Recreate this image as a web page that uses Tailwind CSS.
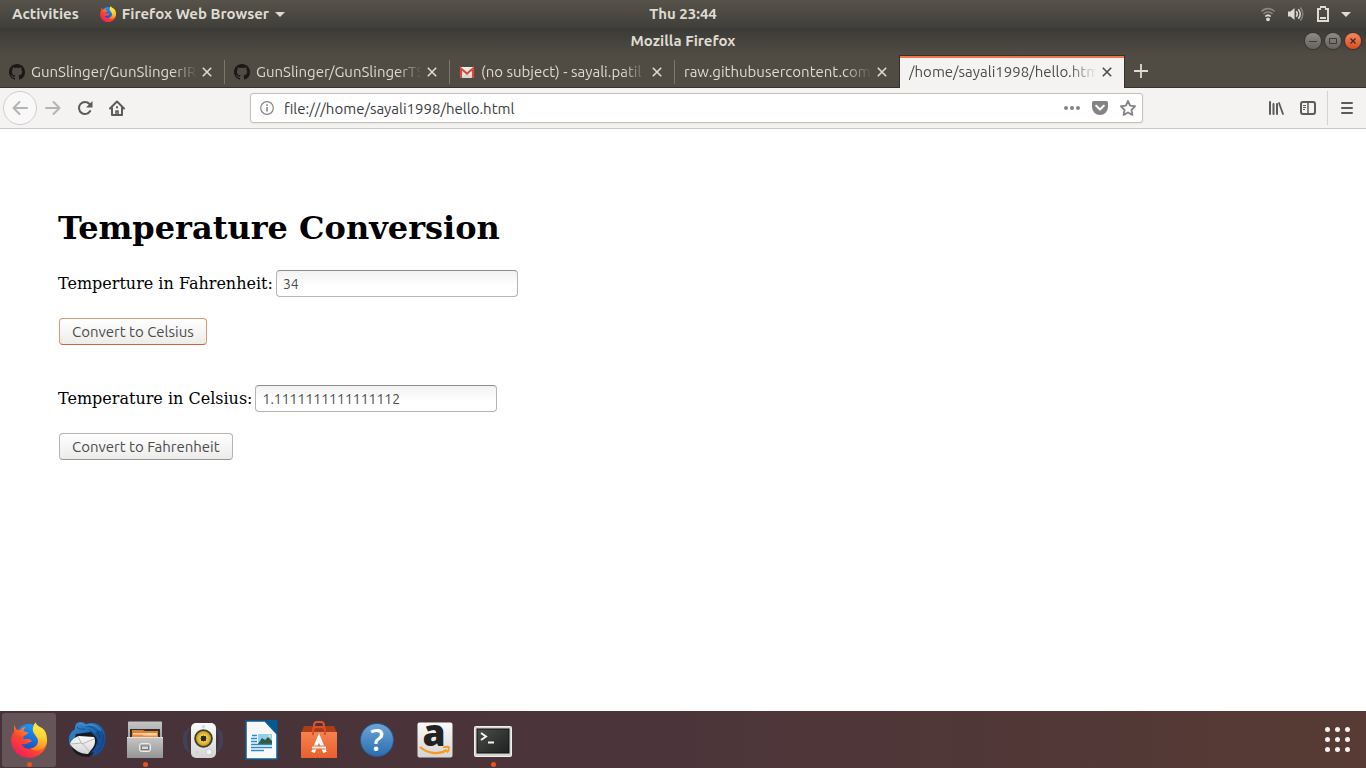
<!DOCTYPE html>
<html lang="en">
<head>
<meta charset="utf-8">
<meta name="viewport" content="width=device-width, initial-scale=1">
<title>Mozilla Firefox</title>
<script src="https://cdn.jsdelivr.net/npm/@tailwindcss/browser@4"></script>
</head>
<body class="flex min-h-screen flex-col bg-white font-['Ubuntu','Noto_Sans',sans-serif] text-[15px] leading-5 text-[#3c3c3c]">

<svg class="absolute size-0" aria-hidden="true">
  <defs>
    <linearGradient id="ffBody" x1="0.85" y1="0.1" x2="0.2" y2="0.9"><stop offset="0" stop-color="#ffd52e"/><stop offset="0.3" stop-color="#ff8a1f"/><stop offset="0.6" stop-color="#ff452e"/><stop offset="1" stop-color="#f0205c"/></linearGradient>
    <linearGradient id="ffTail" x1="0.5" y1="0" x2="0.4" y2="1"><stop offset="0" stop-color="#fff04a"/><stop offset="0.5" stop-color="#ffd030"/><stop offset="1" stop-color="#ff7d20"/></linearGradient>
    <linearGradient id="ffGlobe" x1="0.7" y1="0" x2="0.3" y2="1"><stop offset="0" stop-color="#1a9dff"/><stop offset="1" stop-color="#1c3fae"/></linearGradient>
    <linearGradient id="tbBlue" x1="0" y1="0" x2="1" y2="1"><stop offset="0" stop-color="#3c8fd0"/><stop offset="0.5" stop-color="#1d67b0"/><stop offset="1" stop-color="#123a7c"/></linearGradient>
    <linearGradient id="silver" x1="0" y1="0" x2="0" y2="1"><stop offset="0" stop-color="#c6c6c6"/><stop offset="1" stop-color="#959595"/></linearGradient>
    <linearGradient id="white" x1="0" y1="0" x2="0" y2="1"><stop offset="0" stop-color="#fafafa"/><stop offset="1" stop-color="#d4d4d4"/></linearGradient>
    <linearGradient id="bag" x1="0" y1="0" x2="0" y2="1"><stop offset="0" stop-color="#f58250"/><stop offset="1" stop-color="#e8602c"/></linearGradient>
    <linearGradient id="term" x1="0" y1="0" x2="1" y2="1"><stop offset="0" stop-color="#4b4d4b"/><stop offset="1" stop-color="#1e201f"/></linearGradient>
    <radialGradient id="cone"><stop offset="0" stop-color="#222"/><stop offset="0.38" stop-color="#333"/><stop offset="0.42" stop-color="#f3d24c"/><stop offset="1" stop-color="#c79a12"/></radialGradient>
    <symbol id="firefox" viewBox="0 0 36 36">
      <circle cx="18" cy="16.500" r="14.500" fill="url(#ffGlobe)"/>
      <path d="M3.500 2c-.6 2-.7 5.400-.3 7.200C1.200 12 .1 15 .1 18.300.1 28.200 8 36 18 36s18-7.700 18-17.700l-7 0c-1 5-5.600 8.500-10.600 8.500-4.300 0-6.500-1.700-7.700-5 2.200.8 4 .7 5.800-.3 1.700-1.100 2.500-1.500 3.500-1.500.9 0 .8-1.300 0-2-1.300-1-2.800-1.200-4.600-.9-1.500.3-2.500.2-3.200-.8-.4-1 .1-2 1.200-2.500l3-1.700c.5-.5.500-1.400.1-2-1.900-.1-3.100-.4-4-1.300.2-1.500 1.200-2.700 2.400-3.700-2.700.1-4.400 1-5.900 3-1.800-.3-2.500-.1-3.200.1C4.300 5 3.200 3.600 3.500 2Z" fill="url(#ffBody)"/>
      <path d="M24.500.2c-2 3-3.500 6.300-2.300 9.500 1.500 3.500 4.500 5.300 4.800 8.800.3 4-2.500 7-7.500 8.100 3.500 2.500 8.500 2.400 12 0 3.500-2.500 4.500-5 4.500-9.500 0-4-1.500-8.200-4-10.400-3-2.200-6.500-3-7.500-6.500Z" fill="url(#ffTail)"/>
    </symbol>
    <symbol id="github" viewBox="0 0 16 16"><path fill-rule="evenodd" d="M8 0C3.580 0 0 3.580 0 8c0 3.540 2.290 6.530 5.470 7.590.4.070.55-.17.55-.38 0-.19-.01-.82-.01-1.490-2.010.37-2.530-.49-2.690-.94-.09-.23-.48-.94-.82-1.130-.28-.15-.68-.52-.01-.53.63-.01 1.080.58 1.230.82.72 1.210 1.870.87 2.330.66.07-.52.28-.87.51-1.070-1.780-.2-3.640-.89-3.640-3.950 0-.87.31-1.590.82-2.150-.08-.2-.36-1.020.08-2.120 0 0 .67-.21 2.200.82.64-.18 1.320-.27 2-.27s1.360.09 2 .27c1.530-1.040 2.200-.82 2.200-.82.44 1.100.16 1.920.08 2.120.51.56.82 1.270.82 2.150 0 3.070-1.870 3.750-3.650 3.950.29.25.54.73.54 1.480 0 1.070-.01 1.930-.01 2.200 0 .21.15.46.55.38A8.010 8.010 0 0 0 16 8c0-4.420-3.580-8-8-8Z"/></symbol>
    <symbol id="close" viewBox="0 0 10 10"><path d="M.8.800l8.400 8.400M9.200.800.800 9.200" fill="none" stroke="currentColor" stroke-width="1.600"/></symbol>
  </defs>
</svg>

<!-- System panel -->
<header class="grid h-7 shrink-0 grid-cols-[1fr_auto_1fr] items-center bg-linear-to-b from-[#57534a] to-[#403f3a] px-3 font-bold text-[#dfdbd2]">
  <div class="flex items-center gap-[21px]">
    <button>Activities</button>
    <button class="flex items-center gap-[6px]">
      <svg class="size-4"><use href="#firefox"/></svg>
      <span class="whitespace-nowrap">Firefox Web Browser</span>
      <svg class="h-[5px] w-[10px]" viewBox="0 0 10 5"><path d="M0 0h10L5 5Z" fill="currentColor"/></svg>
    </button>
  </div>
  <button>Thu 23:44</button>
  <div class="flex items-center justify-end pr-[3px]">
    <button class="flex items-center gap-3" aria-label="System menu">
      <svg class="size-4" viewBox="0 0 16 16" fill="none" stroke="#dfdbd2" stroke-width="1.700"><path d="M1.500 5.500C5 1.700 11 1.700 14.500 5.500M3.500 8c2.500-2.700 6.500-2.700 9 0" opacity=".4"/><path d="M5.300 10.500c1.600-1.500 3.800-1.500 5.400 0"/><circle cx="8" cy="13.300" r="1.900" fill="#dfdbd2" stroke="none"/></svg>
      <svg class="h-4 w-[17px]" viewBox="0 0 17 16" fill="none" stroke="#dfdbd2" stroke-width="1.500"><path d="M0 5.500h2.500L6.500 2v12L2.500 10.500H0Z" fill="#dfdbd2" stroke="none"/><path d="M8.300 5.300c1.200 1.600 1.200 3.800 0 5.400M10.300 3.300c2.300 2.800 2.300 6.600 0 9.400"/><path d="M12.300 1.500c3.300 3.800 3.300 9.200 0 13" opacity=".4"/></svg>
      <svg class="h-4 w-3" viewBox="0 0 12 16"><path d="M3 0h6v2h3v14H0V2h3ZM2 4v10h8V4H8V2H4v2Z" fill="#dfdbd2" fill-rule="evenodd"/><path d="M3 11h6v2H3Z" fill="#dfdbd2"/></svg>
      <svg class="h-[5px] w-[10px]" viewBox="0 0 10 5"><path d="M0 0h10L5 5Z" fill="#dfdbd2"/></svg>
    </button>
  </div>
</header>

<!-- Window title bar -->
<div class="grid h-[27px] shrink-0 grid-cols-[1fr_auto_1fr] items-center bg-linear-to-b from-[#3b3a36] to-[#504c44] px-[5px] pb-px text-[#dfdbd2]">
  <span></span>
  <h2 class="font-bold">Mozilla Firefox</h2>
  <div class="flex justify-end gap-1">
    <button aria-label="Minimize" class="flex size-4 items-center justify-center rounded-full bg-linear-to-b from-[#8d8b84] to-[#65635c] shadow-[0_0_1px_1px_#35342f]"><svg class="size-4" viewBox="0 0 16 16"><path d="M4 8.500h8" stroke="#3c3b37"/></svg></button>
    <button aria-label="Maximize" class="flex size-4 items-center justify-center rounded-full bg-linear-to-b from-[#8d8b84] to-[#65635c] shadow-[0_0_1px_1px_#35342f]"><svg class="size-4" viewBox="0 0 16 16"><path d="M4.500 5.500h7v5h-7Z" fill="none" stroke="#3c3b37"/></svg></button>
    <button aria-label="Close" class="flex size-4 items-center justify-center rounded-full bg-linear-to-b from-[#f3865f] to-[#e0481a] shadow-[0_0_1px_1px_#35342f]"><svg class="size-4" viewBox="0 0 16 16"><path d="m5.500 5.500 5 5m0-5-5 5" stroke="#3c2b20" stroke-width="1.300"/></svg></button>
  </div>
</div>

<!-- Tab strip -->
<nav class="flex h-[33px] shrink-0 bg-[#504c44] text-[#dfdbd2]">
  <div class="flex h-full w-[225px] items-center border-b border-[#33322e] pt-px pl-[9px]">
    <svg class="mr-[6px] size-4 shrink-0 text-[#1b1817]" fill="currentColor"><use href="#github"/></svg>
    <a href="#" class="min-w-0 flex-1 overflow-hidden whitespace-nowrap mask-r-from-85% mask-r-to-100%">GunSlinger/GunSlingerIRP</a>
    <button aria-label="Close tab" class="mr-3 ml-[5px]"><svg class="size-[10px]"><use href="#close"/></svg></button>
    <span class="h-6 w-px bg-[#7a776f]"></span>
  </div>
  <div class="flex h-full w-[225px] items-center border-b border-[#33322e] pt-px pl-[9px]">
    <svg class="mr-[6px] size-4 shrink-0 text-[#1b1817]" fill="currentColor"><use href="#github"/></svg>
    <a href="#" class="min-w-0 flex-1 overflow-hidden whitespace-nowrap mask-r-from-85% mask-r-to-100%">GunSlinger/GunSlingerTS</a>
    <button aria-label="Close tab" class="mr-3 ml-[5px]"><svg class="size-[10px]"><use href="#close"/></svg></button>
    <span class="h-6 w-px bg-[#7a776f]"></span>
  </div>
  <div class="flex h-full w-[225px] items-center border-b border-[#33322e] pt-px pl-[9px]">
    <svg class="mr-[6px] size-4 shrink-0" viewBox="0 0 16 16"><path d="M1 3h14v11H1Z" fill="#f1efee"/><path d="m8 9 6 5H2Z" fill="#d9d5d3"/><path d="M2 14V4.500l6 5 6-5V14" fill="none" stroke="#d94a3c" stroke-width="2.200"/></svg>
    <a href="#" class="min-w-0 flex-1 overflow-hidden whitespace-nowrap mask-r-from-85% mask-r-to-100%">(no subject) - sayali.patil</a>
    <button aria-label="Close tab" class="mr-3 ml-[5px]"><svg class="size-[10px]"><use href="#close"/></svg></button>
    <span class="h-6 w-px bg-[#7a776f]"></span>
  </div>
  <div class="flex h-full w-[224px] items-center border-b border-[#33322e] pt-px pl-[9px]">
    <a href="#" class="min-w-0 flex-1 overflow-hidden whitespace-nowrap mask-r-from-85% mask-r-to-100%">raw.githubusercontent.com/</a>
    <button aria-label="Close tab" class="mr-3 ml-[5px]"><svg class="size-[10px]"><use href="#close"/></svg></button>
  </div>
  <div class="flex h-full w-[226px] border-x border-t border-[#33322e] bg-[#f4f3f2] text-[#4c4c4c]">
    <div class="flex w-full items-center border-t-2 border-[#f07746] pr-3 pb-[2px] pl-[9px]">
      <a href="#" aria-current="page" class="min-w-0 flex-1 overflow-hidden whitespace-nowrap mask-r-from-85% mask-r-to-100%">/home/sayali1998/hello.html</a>
      <button aria-label="Close tab" class="ml-[5px]"><svg class="size-[10px]"><use href="#close"/></svg></button>
    </div>
  </div>
  <div class="flex h-full flex-1 items-center border-b border-[#33322e] pl-[9px]">
    <button aria-label="New tab"><svg class="size-[14px]" viewBox="0 0 14 14"><path d="M7 0v14M0 7h14" stroke="currentColor" stroke-width="1.800"/></svg></button>
  </div>
</nav>

<!-- Navigation toolbar -->
<div class="flex h-[41px] shrink-0 items-center border-b border-[#c9c6c2] bg-[#f4f3f2] pr-[11px] pl-[3px] text-[#5c5b59]">
  <button aria-label="Back" class="flex size-[34px] items-center justify-center rounded-full border border-[#d0cdca] bg-[#f9f8f8] text-[#b5b4b2]"><svg class="size-4" viewBox="0 0 16 16" fill="none" stroke="currentColor" stroke-width="2" stroke-linecap="round" stroke-linejoin="round"><path d="M15 8H1.500M7.500 2l-6 6 6 6"/></svg></button>
  <button aria-label="Forward" class="ml-2 text-[#b5b4b2]"><svg class="size-4" viewBox="0 0 16 16" fill="none" stroke="currentColor" stroke-width="2" stroke-linecap="round" stroke-linejoin="round"><path d="M1 8h13.500M8.500 2l6 6-6 6"/></svg></button>
  <button aria-label="Reload" class="ml-4"><svg class="size-4" viewBox="0 0 16 16" fill="none" stroke="currentColor" stroke-width="2"><path d="M12.500 4A6 6 0 1 0 13.200 11" stroke-linecap="round"/><path d="M15.500 1v6.500H9Z" fill="currentColor" stroke="none"/></svg></button>
  <button aria-label="Home" class="ml-4"><svg class="size-4" viewBox="0 0 16 16" fill="none" stroke="currentColor" stroke-width="2" stroke-linejoin="round" stroke-linecap="round"><path d="M1 8.500 8 1.500l7 7M3 8v7h10V8"/><path d="M7 15v-4h2v4" stroke-width="1.600"/><path d="M8 7v.5"/></svg></button>
  <div class="mx-[125px] flex h-[30px] flex-1 items-center rounded-[3px] border border-[#c3c0bc] bg-white pr-[6px] pl-[9px] text-[#858585] shadow-[0_1px_2px_#0000000d]">
    <svg class="size-[14px] shrink-0" viewBox="0 0 14 14"><circle cx="7" cy="7" r="6.300" fill="none" stroke="currentColor" stroke-width="1.200"/><path d="M6.200 6h1.600v4.500H6.200ZM6.200 3.300h1.600v1.600H6.200Z" fill="currentColor"/></svg>
    <input aria-label="Address" type="text" value="file:///home/sayali1998/hello.html" class="ml-[10px] min-w-0 flex-1 bg-transparent pt-[2px] text-[#3c3c3c] outline-none">
    <button aria-label="Page actions"><svg class="size-4" viewBox="0 0 16 16" fill="currentColor"><circle cx="2" cy="8" r="2"/><circle cx="8" cy="8" r="2"/><circle cx="14" cy="8" r="2"/></svg></button>
    <button aria-label="Save to Pocket" class="ml-3"><svg class="size-4" viewBox="0 0 16 16"><path d="M1.500 1h13A1.500 1.500 0 0 1 16 2.500V7A8 8 0 0 1 0 7V2.500A1.500 1.500 0 0 1 1.500 1Z" fill="currentColor"/><path d="m4.200 5.800 3.800 3.600 3.800-3.600" fill="none" stroke="#fff" stroke-width="2" stroke-linecap="round" stroke-linejoin="round"/></svg></button>
    <button aria-label="Bookmark" class="ml-3"><svg class="size-4" viewBox="0 0 16 16"><path d="m8 1 2.100 4.600 4.900.7-3.500 3.500.9 5L8 12.500l-4.400 2.300.9-5L1 6.300l4.900-.7Z" fill="none" stroke="currentColor" stroke-width="1.900" stroke-linejoin="round"/></svg></button>
  </div>
  <button aria-label="Library"><svg class="size-4" viewBox="0 0 16 16" fill="none" stroke="currentColor" stroke-width="2" stroke-linecap="round"><path d="M2 2v12M5.500 4v10M9 4v10"/><path d="m11 3 4 11" stroke-width="1.800"/></svg></button>
  <button aria-label="Sidebars" class="ml-4"><svg class="size-4" viewBox="0 0 16 16" fill="none" stroke="currentColor"><rect x="1" y="2" width="14" height="12" rx="2" stroke-width="2"/><path d="M8 2v12" stroke-width="1.500"/><path d="M3 5.500h3M3 7.500h3M3 9.500h2"/></svg></button>
  <span class="ml-[11px] h-[34px] w-px bg-[#d5d3d0]"></span>
  <button aria-label="Menu" class="ml-[11px]"><svg class="size-4" viewBox="0 0 16 16" fill="none" stroke="currentColor" stroke-width="2" stroke-linecap="round"><path d="M3 3h10M3 8h10M3 13h10"/></svg></button>
</div>

<!-- Page content -->
<main class="flex flex-1 flex-col items-start px-[58px] pt-20 pb-20 font-['DejaVu_Serif',serif] text-base text-black">
  <h1 class="text-[32px] leading-[38px] font-bold">Temperature Conversion</h1>
  <div class="mt-[23px] flex items-center gap-[3px]">
    <label for="fahrenheit">Temperture in Fahrenheit:</label>
    <input id="fahrenheit" type="text" value="34" class="h-[27px] w-[242px] rounded-[4px] border border-[#b6b3b0] border-t-[#8f8d8b] bg-linear-to-b from-[#f3f2f2] to-white to-60% px-[6px] font-['Ubuntu','Noto_Sans',sans-serif] text-sm text-[#4c4c4c] outline-none">
  </div>
  <button class="mt-[21px] ml-px h-[27px] rounded-[4px] border border-[#dc9578] border-b-[#cd6440] bg-linear-to-b from-white to-[#ececeb] px-3 font-['Ubuntu','Noto_Sans',sans-serif] text-[15px] leading-5 text-[#4c4c4c]">Convert to Celsius</button>
  <div class="mt-10 flex items-center gap-[3px]">
    <label for="celsius">Temperature in Celsius:</label>
    <input id="celsius" type="text" value="1.1111111111111112" class="h-[27px] w-[242px] rounded-[4px] border border-[#b6b3b0] border-t-[#8f8d8b] bg-linear-to-b from-[#f3f2f2] to-white to-60% px-[6px] font-['Ubuntu','Noto_Sans',sans-serif] text-sm text-[#4c4c4c] outline-none">
  </div>
  <button class="mt-[21px] ml-px h-[27px] rounded-[4px] border border-[#b6b3b0] border-b-[#979593] bg-linear-to-b from-white to-[#ececeb] px-3 font-['Ubuntu','Noto_Sans',sans-serif] text-[15px] leading-5 text-[#4c4c4c]">Convert to Fahrenheit</button>
</main>

<!-- Dock -->
<footer class="flex h-[57px] shrink-0 items-center justify-between bg-linear-to-r from-[#463239] via-[#4c353a] to-[#573b34] pr-[16px] pl-[2px]">
  <div class="flex gap-1">
    <button aria-label="Firefox" class="relative flex size-[54px] items-center justify-center rounded-[3px] bg-[#665558]"><svg class="size-9"><use href="#firefox"/></svg><span class="absolute bottom-0 size-[5px] rounded-full bg-[#e95420]"></span></button>
    <button aria-label="Thunderbird" class="flex size-[54px] items-center justify-center"><svg class="size-10" viewBox="0 0 40 40"><path d="M10 3c3-2 7-1 9 1 10-3 17 2 19 10 2 10-2 19-12 23 1-2 1-3 0-5-2 1-3 2-4 2 4-4 5-8 4-12L9 17 4 27C0 20 2 13 8 9c0-3 0-4 2-6Z" fill="url(#tbBlue)"/><path d="m9 14 15-2 8 8-4 11-6 6C13 37 7 34 5 28Z" fill="#191b23"/><path d="m12 16 15 1c2 4 1 9-3 13l-3 4C13 34 6 29 3 24c1-3 3-6 9-8Z" fill="url(#white)"/><path d="m11 17 4 7 12-5M4 24l11-1 7 8" fill="none" stroke="#bcb8b3"/><path d="M28 13c4 7 2 15-5 20l4-1-1 4c8-3 12-9 12-17L34 9Z" fill="#184f95"/><path d="M10 7c2 3 5 2 8 2M18 6c8 0 14 4 15 13M22 10c6 3 9 9 9 15M36 14c1 8-2 13-6 18" fill="none" stroke="#0d3a78" opacity=".7"/><path d="M12 4c3-1 4 1 6 2 7-3 13 0 16 5" fill="none" stroke="#5ba9de" opacity=".7"/></svg></button>
    <button aria-label="Files" class="relative flex size-[54px] items-center justify-center"><svg class="size-10" viewBox="0 0 40 40"><path d="M3 2.500q0-1 1-1h32q1 0 1 1V24H3Z" fill="url(#silver)"/><path d="M5 9h30v9H5Z" fill="#332d2b"/><path d="M7 10h11l2 1h13v6H7Z" fill="#d97e3d"/><path d="M8 13h24v4H8Z" fill="#ffd29c"/><path d="M7 14.500h10l2 1h14V17H7Z" fill="#ef8c43"/><path d="M2 17h36v21H2Z" fill="url(#silver)"/><path d="M2 17.500h36" stroke="#e0e0e0"/><rect x="14.500" y="23.500" width="11" height="8" rx="2" fill="#bbb" stroke="#eee"/><rect x="16.500" y="26" width="7" height="3.500" fill="#ddd" stroke="#777"/></svg><span class="absolute bottom-0 size-[5px] rounded-full bg-[#e95420]"></span></button>
    <button aria-label="Rhythmbox" class="flex size-[54px] items-center justify-center"><svg class="size-10" viewBox="0 0 40 40"><path d="M6 8c-4 7-4 17 0 24M3 11c-3 6-3 12 0 18M34 8c4 7 4 17 0 24M37 11c3 6 3 12 0 18" fill="none" stroke="#3d4c70" stroke-width="2" opacity=".6"/><rect x="8" y="3" width="25" height="35" rx="5" fill="url(#white)"/><circle cx="20.500" cy="18.500" r="9.300" fill="#3b3b36"/><circle cx="20.500" cy="18.500" r="7.500" fill="url(#cone)"/><circle cx="20.500" cy="6.500" r="1.500" fill="#d4d4d4"/><circle cx="14" cy="32" r="1.500" fill="#d0d0d0"/><circle cx="26" cy="32" r="3" fill="#f4f4f4" stroke="#ccc"/></svg></button>
    <button aria-label="LibreOffice Writer" class="flex size-[54px] items-center justify-center"><svg class="size-10" viewBox="0 0 40 40"><path d="M5 1h19l12 13v25H5Z" fill="#f8f9fa" stroke="#0d5e95" stroke-width="1.500"/><path d="M24 0h12.500v14Z" fill="#075a91"/><path d="M17 14h14v10H17Z" fill="#8ed0f0"/><path d="m17 24 4-6 3 2 3-3 4 4v3Z" fill="#315b48"/><circle cx="28.500" cy="16" r="1.200" fill="#ffe26b"/><path d="M11 15.500h5M10 18.500h6M10 21.500h6M10 24.500h21M10 27.500h21M10 30.500h13" stroke="#2e8ac2" stroke-width="1.600"/></svg></button>
    <button aria-label="Ubuntu Software" class="flex size-[54px] items-center justify-center"><svg class="size-10" viewBox="0 0 40 40"><path d="M5 6h30l3 7H2Z" fill="#a93e19"/><path d="M15 9V6q0-4 3-4h4q3 0 3 4v3" fill="none" stroke="#df5430" stroke-width="2"/><path d="M2 12h36v26H2Z" fill="url(#bag)"/><path d="M14 15V10q0-3 3-3h6q3 0 3 3v5" fill="none" stroke="#d94f2b" stroke-width="2"/><path d="M14 32.500 20 18l6 14.500" fill="none" stroke="#fff" stroke-width="3.600"/><path d="M12 27.500h14" stroke="#ef6e3b" stroke-width="4"/><path d="M13 27.500h14" stroke="#fff" stroke-width="1.800"/></svg></button>
    <button aria-label="Help" class="flex size-[54px] items-center justify-center"><span class="flex size-[34px] items-center justify-center rounded-full border border-[#255c96] bg-linear-to-b from-[#6ba5d6] to-[#2c6db0] font-['Open_Sans',sans-serif] text-[30px] leading-none font-semibold text-white">?</span></button>
    <button aria-label="Amazon" class="flex size-[54px] items-center justify-center"><svg class="size-10 overflow-visible" viewBox="0 0 40 40"><rect x="2.500" y="2.500" width="35" height="35" rx="2" fill="url(#white)"/><text x="19" y="26" text-anchor="middle" font-family="Open Sans, sans-serif" font-weight="800" font-size="37" fill="#222">a</text><path d="M5 27c8 7 19 8 27 3" fill="none" stroke="#f79a1e" stroke-width="2.300"/><path d="M28 27.500c3-1 5-1 6 0 0 2-1 4-2 5" fill="none" stroke="#f79a1e" stroke-width="1.800"/></svg></button>
    <button aria-label="Terminal" class="relative flex size-[54px] items-center justify-center"><svg class="size-10" viewBox="0 0 40 40"><rect x="1.500" y="6.500" width="37" height="30" rx="1" fill="#d5d5d3" stroke="#efefed"/><rect x="4" y="9" width="32" height="24" fill="url(#term)" stroke="#111"/><path d="m8 13 5 3.500L8 20M15 22.500h6" fill="none" stroke="#f4f4f4" stroke-width="2"/></svg><span class="absolute bottom-0 size-[5px] rounded-full bg-[#e95420]"></span></button>
  </div>
  <button aria-label="Show Applications" class="grid grid-cols-3 gap-[5px]">
    <span class="size-[5px] rounded-full bg-[#f4f2f1]"></span><span class="size-[5px] rounded-full bg-[#f4f2f1]"></span><span class="size-[5px] rounded-full bg-[#f4f2f1]"></span>
    <span class="size-[5px] rounded-full bg-[#f4f2f1]"></span><span class="size-[5px] rounded-full bg-[#f4f2f1]"></span><span class="size-[5px] rounded-full bg-[#f4f2f1]"></span>
    <span class="size-[5px] rounded-full bg-[#f4f2f1]"></span><span class="size-[5px] rounded-full bg-[#f4f2f1]"></span><span class="size-[5px] rounded-full bg-[#f4f2f1]"></span>
  </button>
</footer>
</body>
</html>
